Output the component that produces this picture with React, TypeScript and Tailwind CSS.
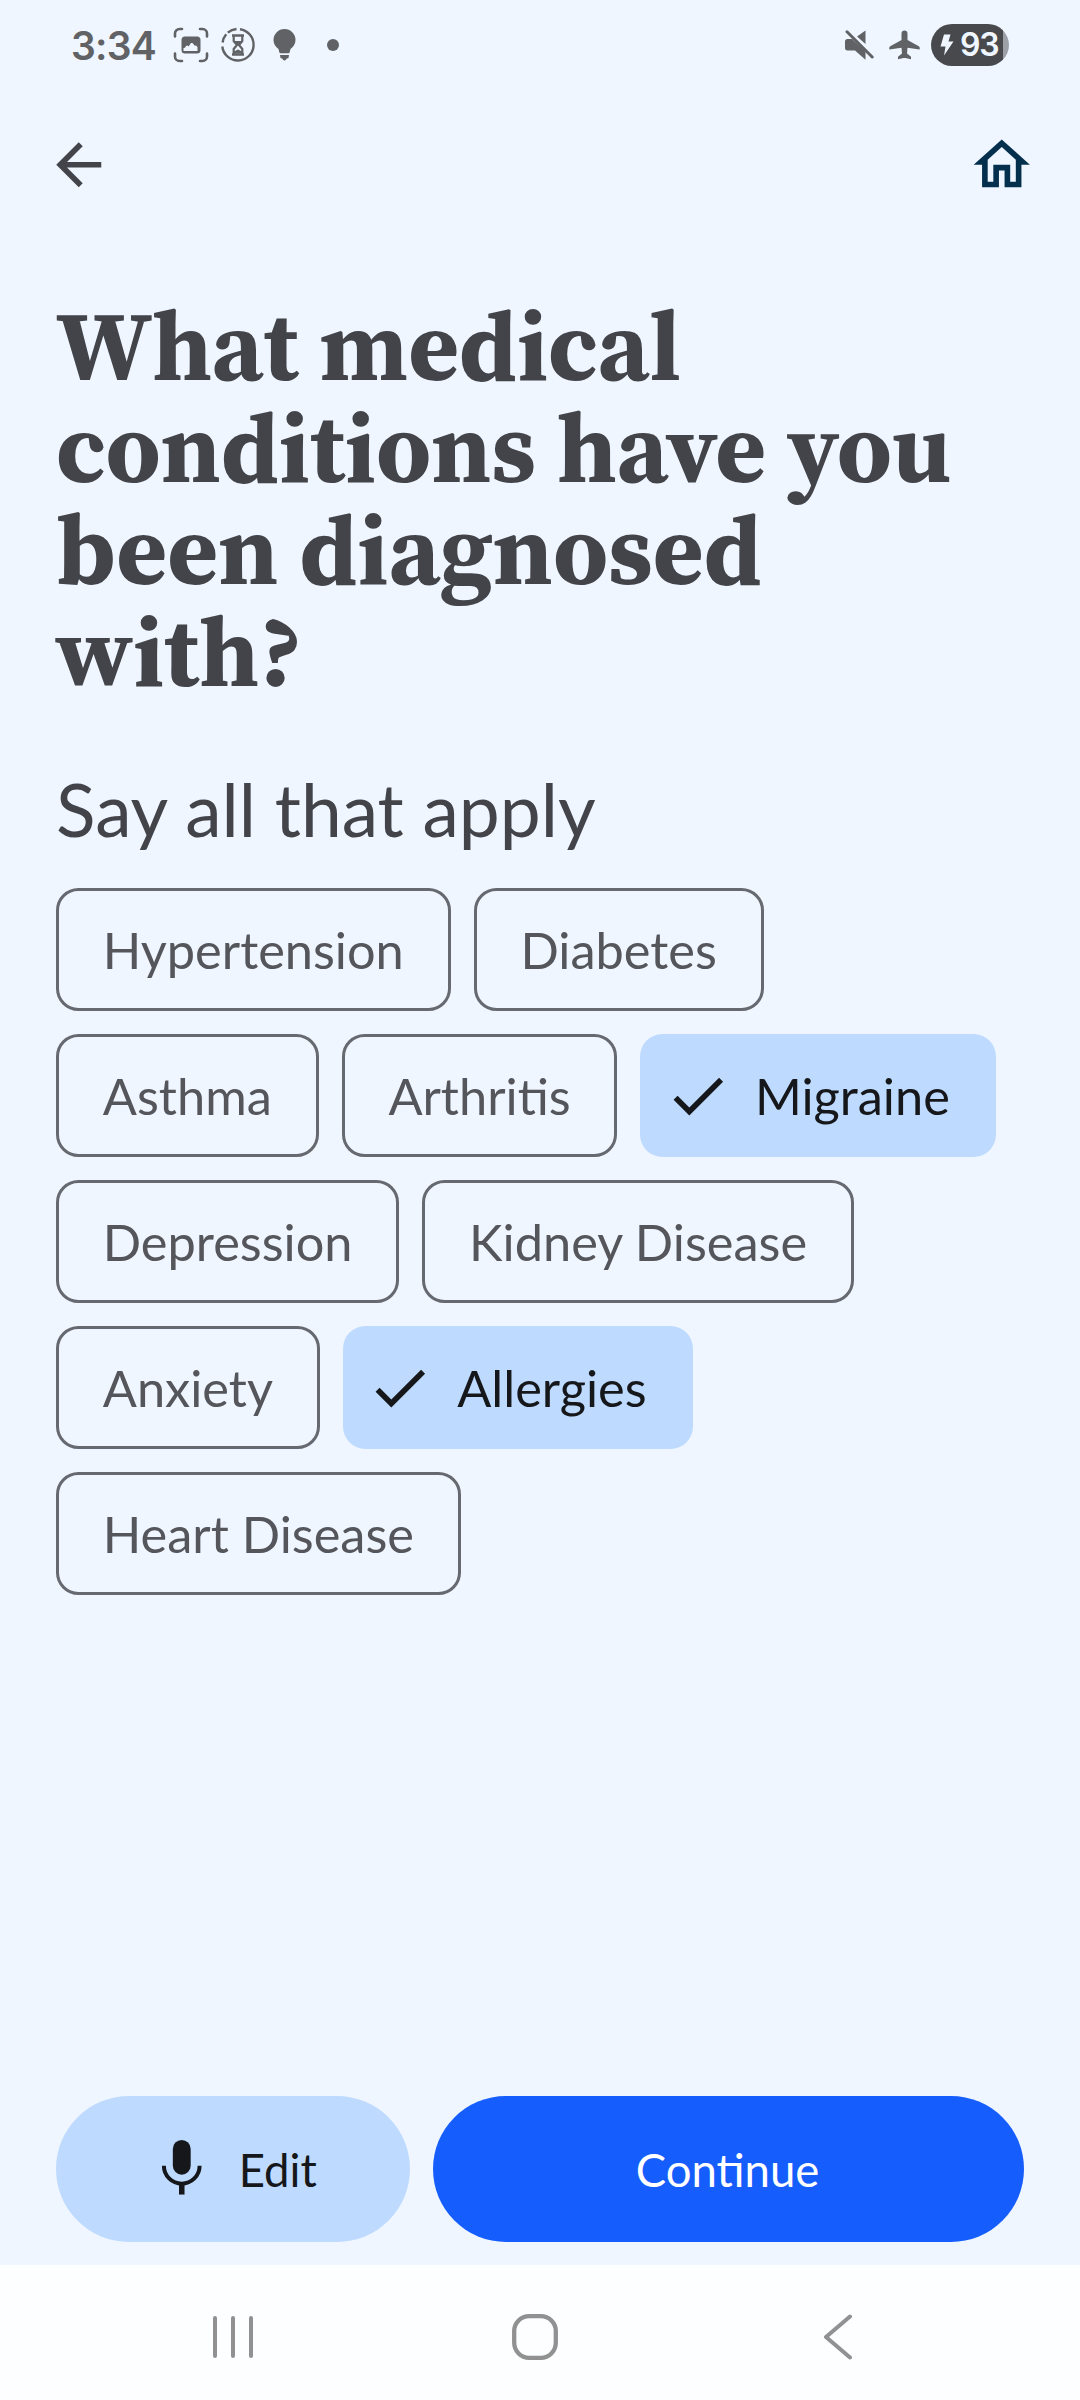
type Condition = { label: string; selected?: boolean };

const rows: Condition[][] = [
  [{ label: "Hypertension" }, { label: "Diabetes" }],
  [{ label: "Asthma" }, { label: "Arthritis" }, { label: "Migraine", selected: true }],
  [{ label: "Depression" }, { label: "Kidney Disease" }],
  [{ label: "Anxiety" }, { label: "Allergies", selected: true }],
  [{ label: "Heart Disease" }],
];

function StatusBar() {
  return (
    <div className="flex h-[90px] items-center justify-between px-[71px] text-[#606266]">
      <div className="flex items-center">
        <span className="w-[102px] font-['Inter',sans-serif] text-[39px] leading-none font-semibold tracking-[-0.8px] whitespace-nowrap">3:34</span>
        {/* Screenshot */}
        <svg className="h-[36px] w-[36px]" viewBox="0 0 36 36" fill="none" stroke="currentColor" strokeWidth="2.6" strokeLinecap="round">
          <path d="M2 9.5V6.5A4.5 4.5 0 0 1 6.5 2H9M27 2h2.5A4.5 4.5 0 0 1 34 6.5v3M34 26.5v3a4.5 4.5 0 0 1-4.5 4.5H27M9 34H6.5A4.5 4.5 0 0 1 2 29.5v-3" />
          <rect x="8.5" y="9.5" width="19" height="17" rx="3.5" fill="currentColor" stroke="none" />
          <path d="M10.500 24v-3l1.500-.3 1-1.700 1.500-.5 1 1 2.500-3.500h1.500l2 2.500 2 .3 1 1.500V24z" fill="#eff6ff" stroke="none" />
        </svg>
        {/* Timer */}
        <svg className="ml-[11px] h-[36px] w-[36px]" viewBox="0 0 36 36" fill="none" stroke="currentColor" strokeWidth="2.4">
          <path d="M20 2.200A15.700 15.700 0 1 1 2.300 19.500" />
          <path d="M2.600 15.500A15.700 15.700 0 0 1 6.200 7.300M7.800 5.700A15.700 15.700 0 0 1 16.500 2" />
          <path d="M12 8.500h12M12 27.500h12" strokeWidth="2.6" />
          <path d="M13.700 9v5l3.300 4-3.300 4v5M22.300 9v5L19 18l3.300 4v5" strokeWidth="2.2" />
          <path d="M14.500 14h7L18 18.500zM14 26.500v-2l4-2 4 2v2z" fill="currentColor" stroke="none" />
        </svg>
        {/* Bulb */}
        <svg className="ml-[17px] h-[34px] w-[23px]" viewBox="0 0 23 34" fill="currentColor">
          <path d="M11.500 1A11 11 0 0 0 .5 12c0 4 2.200 7 5 9l.8 3.300c.2.700.6 1 1.200 1h8c.6 0 1-.3 1.200-1l.8-3.300c2.800-2 5-5 5-9a11 11 0 0 0-11-11z" />
          <path d="M7 27h9l-.5 3-2 .8c-.4 1.300-1 1.700-2 1.700s-1.600-.4-2-1.700l-2-.8z" />
        </svg>
        <span className="ml-[31px] h-[12px] w-[12px] rounded-full bg-current" />
      </div>
      <div className="flex items-center">
        {/* Muted */}
        <svg className="mr-[15px] h-[32px] w-[30px]" viewBox="0 0 30 32" fill="currentColor">
          <path d="M21.500 1.500v13.500L13 7.500zM1 12.500c0-1.500.9-2.500 2.500-2.500h4.600l13.400 12.500v8.300L11 21.500H3.500C1.900 21.500 1 20.600 1 19z" />
          <path d="M4.800 1.800 29 26" stroke="#eff6ff" strokeWidth="3" />
          <path d="M3 2.800 28.200 28" stroke="currentColor" strokeWidth="3" strokeLinecap="round" />
        </svg>
        {/* Airplane mode */}
        <svg className="h-[31px] w-[31px]" viewBox="0 0 31 31" fill="currentColor">
          <path d="M15.500.5c1.900 0 3 1.200 3 3.200V10l11.300 6.200c.6.400.9.900.9 1.600v1.700l-12.200-1.700-.5 5.600 4 3.400v2.400l-5.500-1.200h-2L9 29.200v-2.400l4-3.400-.5-5.600L.3 19.500v-1.700c0-.7.3-1.200.9-1.600L12.500 10V3.700c0-2 1.100-3.200 3-3.200z" />
        </svg>
        {/* Battery */}
        <div className="ml-[11px] flex h-[42px] w-[78px] items-center gap-[6px] overflow-hidden rounded-full bg-[linear-gradient(to_right,#47494c_72px,#9da1a7_72px)] pl-[9px] text-[#eff6ff]">
          <svg className="h-[22px] w-[14px] shrink-0" viewBox="0 0 14 22" fill="currentColor">
            <path d="M4 .5h6.500L8.500 7.500h5L4 21.500l1.500-9H.5z" />
          </svg>
          <span className="font-['Inter',sans-serif] text-[32px] leading-none font-semibold tracking-[-1.2px]">93</span>
        </div>
      </div>
    </div>
  );
}

function CheckIcon() {
  return (
    <svg className="h-[67.5px] w-[67.5px] shrink-0" viewBox="0 0 24 24" fill="currentColor">
      <path d="M9 16.170 4.830 12l-1.420 1.410L9 19 21 7l-1.410-1.410z" />
    </svg>
  );
}

function Chip({ label, selected }: Condition) {
  return selected ? (
    <button className="flex h-[123px] items-center gap-[23.5px] rounded-[22.5px] bg-blue-200 pr-[46.5px] pl-[23.5px] text-[#15171a]">
      <CheckIcon />
      <span className="pt-[2px]">{label}</span>
    </button>
  ) : (
    <button className="flex h-[123px] items-center rounded-[22.5px] border-[3px] border-[#66696f] px-[43.8px] text-[#55565b]">
      <span className="pt-[2px]">{label}</span>
    </button>
  );
}

export default function App() {
  return (
    <div className="flex h-[2400px] w-[1080px] flex-col bg-blue-50 font-['Lato',sans-serif]">
      <StatusBar />
      <header className="mt-[41px] flex h-[68px] items-center justify-between px-[45px]">
        <svg className="h-[67.5px] w-[67.5px] text-[#434449]" viewBox="0 0 24 24" fill="currentColor">
          <path d="M20 11H7.830l5.590-5.590L12 4l-8 8 8 8 1.410-1.410L7.830 13H20v-2z" />
        </svg>
        <svg className="h-[67.5px] w-[67.5px] text-[#05304d]" viewBox="0 0 24 24" fill="currentColor">
          <path d="m12 5.690 5 4.500V18h-2v-6H9v6H7v-7.810l5-4.500M12 3 2 12h3v8h6v-6h2v6h6v-8h3L12 3z" />
        </svg>
      </header>
      <main className="flex flex-1 flex-col px-[56px]">
        <h1 className="mt-[96px] font-['Source_Serif_4','Liberation_Serif',serif] text-[97.8px] leading-[102px] font-bold whitespace-nowrap text-[#434449]">
          What medical
          <br />
          conditions have you
          <br />
          been diagnosed
          <br />
          with?
        </h1>
        <h2 className="mt-[62px] text-[73.1px] leading-[88px] text-[#434449]">Say all that apply</h2>
        <div className="mt-[35px] flex flex-col gap-[23px] text-[50.5px] leading-none whitespace-nowrap">
          {rows.map((row) => (
            <div key={row[0].label} className="flex gap-[23px]">
              {row.map((c) => (
                <Chip key={c.label} {...c} />
              ))}
            </div>
          ))}
        </div>
        <div className="mt-auto mb-[23px] flex gap-[23px] text-[45.5px] leading-none">
          <button className="flex h-[146px] w-[354px] items-center justify-center gap-[23px] rounded-full bg-blue-200 pr-[1px] text-[#15171a]">
            <svg className="h-[67.5px] w-[67.5px]" viewBox="0 0 68 68" fill="none" stroke="currentColor">
              <rect x="25" y="5" width="18" height="35" rx="9" fill="currentColor" stroke="none" />
              <path d="M16 31a18 18 0 0 0 36 0" strokeWidth="4" />
              <path d="M34 49v11" strokeWidth="5.6" />
            </svg>
            <span className="pt-[2px]">Edit</span>
          </button>
          <button className="flex h-[146px] flex-1 items-center justify-center rounded-full bg-blue-600 pr-[2px] text-white">
            <span className="pt-[2px]">Continue</span>
          </button>
        </div>
      </main>
      <nav className="flex h-[135px] items-center bg-[#fdfeff] pt-[8px] pl-[213px] text-[#919191]">
        <svg className="h-[46px] w-[40px]" viewBox="0 0 40 46" fill="none" stroke="currentColor" strokeWidth="4" strokeLinecap="round">
          <path d="M2 4v38M20 4v38M38 4v38" />
        </svg>
        <svg className="ml-[259px] h-[46px] w-[46px]" viewBox="0 0 46 46" fill="none" stroke="currentColor" strokeWidth="4.3">
          <rect x="2.2" y="2.2" width="41.6" height="41.6" rx="15" />
        </svg>
        <svg className="ml-[265px] h-[46px] w-[30px]" viewBox="0 0 30 46" fill="none" stroke="currentColor" strokeWidth="4" strokeLinecap="round" strokeLinejoin="round">
          <path d="M27 2.500 3 23 27 43.500" />
        </svg>
      </nav>
    </div>
  );
}
